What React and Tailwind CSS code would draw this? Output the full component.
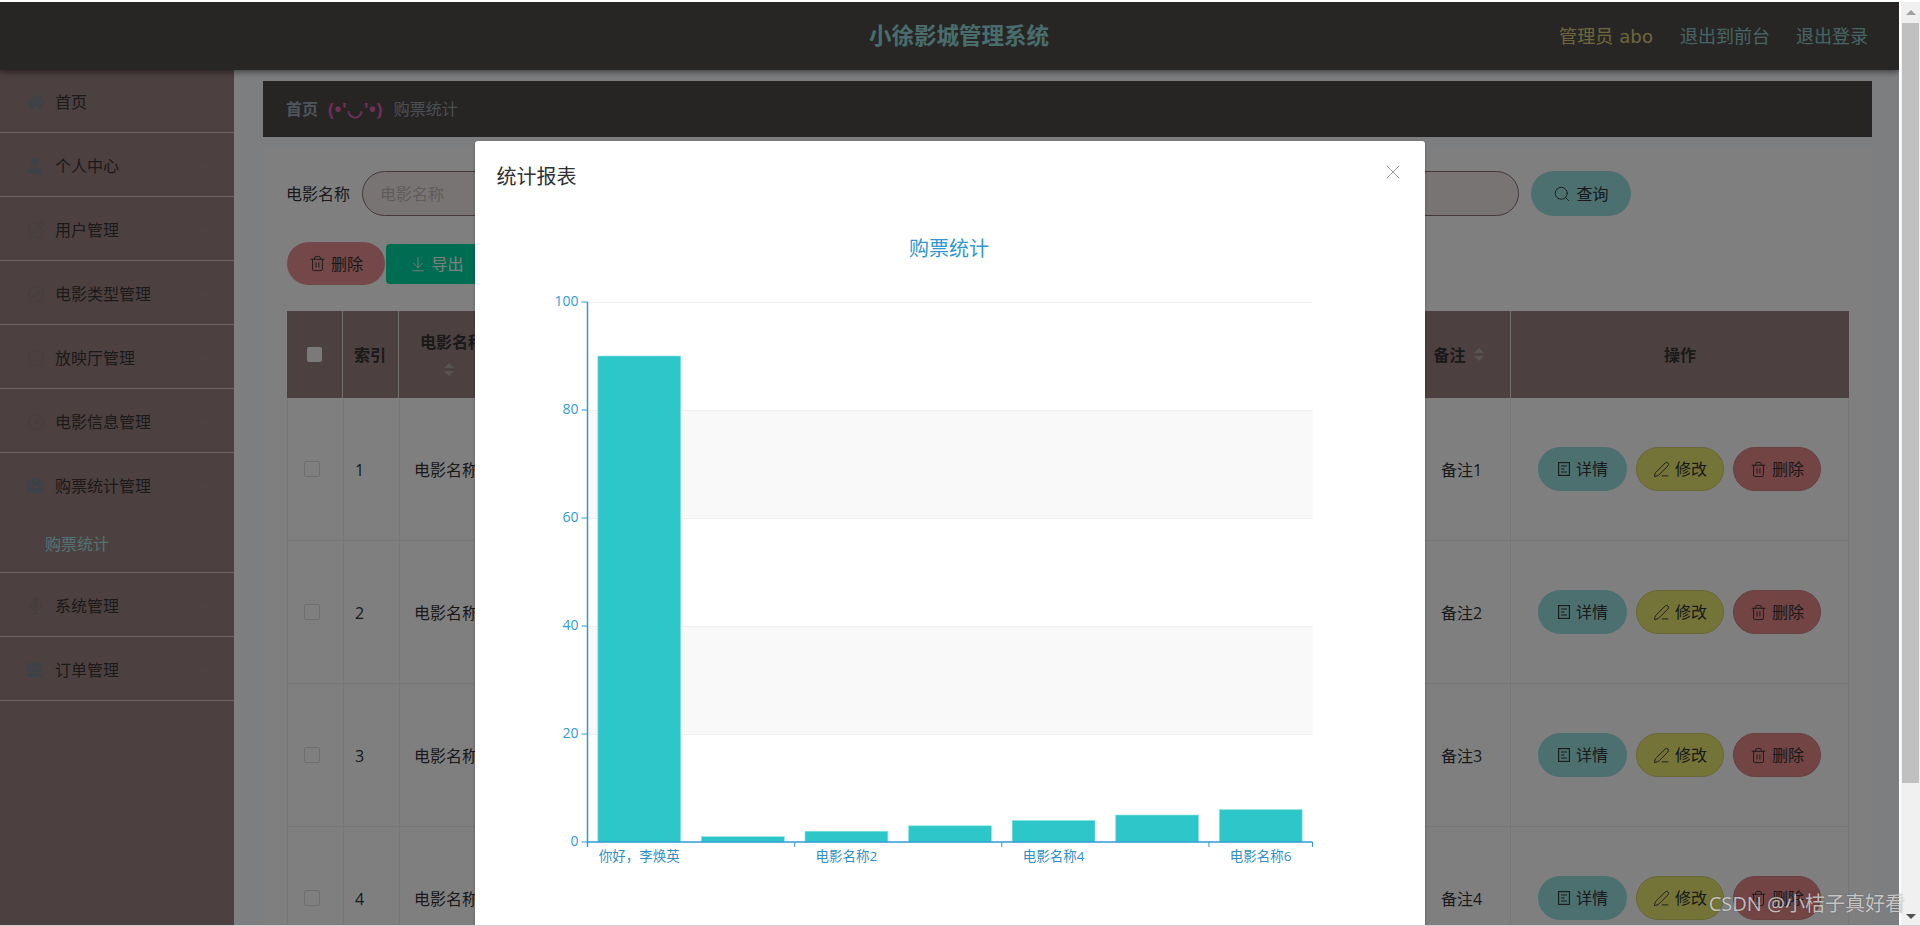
import React from "react";
import { ChevronDown, ChevronUp, Search, ArrowDownToLine, Trash2, PenLine, X, SquarePen, Compass, Square, CircleGauge } from "lucide-react";
import { FaHome, FaUser, FaBriefcase, FaMicrophone, FaServer } from "react-icons/fa";

const DocIcon = () => (
  <svg width="14" height="16" viewBox="0 0 14 16" fill="none" stroke="currentColor" strokeWidth="1.1">
    <rect x="1.6" y="1.6" width="10.8" height="12.8" />
    <path d="M4 5h6M4 8h3.5M4 11h6" />
  </svg>
);

const menu = [
  { label: "首页", icon: <FaHome size={18} />, h: "h-[62px]", noArrow: true },
  { label: "个人中心", icon: <FaUser size={16} /> },
  { label: "用户管理", icon: <SquarePen size={18} strokeWidth={1.4} />, faint: true },
  { label: "电影类型管理", icon: <Compass size={18} strokeWidth={1.4} />, faint: true },
  { label: "放映厅管理", icon: <Square size={18} strokeWidth={1.4} />, faint: true },
  { label: "电影信息管理", icon: <CircleGauge size={18} strokeWidth={1.4} />, faint: true },
  { label: "购票统计管理", icon: <FaBriefcase size={17} />, open: true },
  { label: "系统管理", icon: <FaMicrophone size={17} />, faint: true },
  { label: "订单管理", icon: <FaServer size={16} /> },
];

function MenuItem({ item }) {
  return (
    <div className="border-b border-[#e0d0d0]">
      <div className={`flex items-center pl-[27px] pr-[22px] pt-[2px] text-[16px] text-[#383333] ${item.h || "h-[63px]"}`}>
        <span className={`w-[28px] flex ${item.faint ? "text-[#8c7c7c]" : "text-[#78858f]"}`}>{item.icon}</span>
        <span className="flex-1">{item.label}</span>
        {!item.noArrow &&
          (item.open ? (
            <ChevronUp size={14} className="text-[#a08888]" />
          ) : (
            <ChevronDown size={14} className="text-[#a08888]" />
          ))}
      </div>
      {item.open && (
        <div className="h-[56px] pl-[45px] flex items-center text-[16px] text-[#a4ffff] opacity-80">购票统计</div>
      )}
    </div>
  );
}

function Pill({ className, icon, children }) {
  return (
    <button className={`flex items-center justify-center gap-[5px] rounded-full text-[16px] text-[#333] ${className}`}>
      {icon}
      <span>{children}</span>
    </button>
  );
}

function Sort() {
  return (
    <span className="inline-flex flex-col gap-[3px] items-center align-middle">
      <span className="w-0 h-0 border-x-[5px] border-x-transparent border-b-[5px] border-b-[#b0a8a8]" />
      <span className="w-0 h-0 border-x-[5px] border-x-transparent border-t-[5px] border-t-[#b0a8a8]" />
    </span>
  );
}

const cols = "grid grid-cols-[56px_56px_120px_1fr_98px_338px]";

function Row({ n }) {
  const cell = "border-r border-b border-[#eeeeee] flex items-center text-[16px] text-[#333]";
  return (
    <div className={`${cols} h-[143px] border-l border-[#eeeeee]`}>
      <div className={`${cell} pl-[16px]`}>
        <span className="w-[16px] h-[16px] border border-[#dcdfe6] rounded-[2px]" />
      </div>
      <div className={`${cell} pl-[11px] pt-[1px]`}>{n}</div>
      <div className={`${cell} pl-[14px] pt-[1px]`}>电影名称{n}</div>
      <div className={cell} />
      <div className={`${cell} justify-center pt-[1px]`}>备注{n}</div>
      <div className={`${cell} pl-[27px] gap-[9px]`}>
        <Pill className="w-[89px] h-[44px] bg-[#98e0e0]" icon={<DocIcon />}>详情</Pill>
        <Pill className="w-[88px] h-[44px] bg-[#e8e870] border border-[#d0d068]" icon={<PenLine size={17} strokeWidth={1.3} />}>修改</Pill>
        <Pill className="w-[88px] h-[44px] bg-[#e48888] border border-[#d08080]" icon={<Trash2 size={17} strokeWidth={1.3} />}>删除</Pill>
      </div>
    </div>
  );
}

function Chart() {
  const x0 = 112.5, y0 = 637, unit = 5.4, band = 725 / 7;
  const blue = "#2f9bd6";
  const values = [90, 1, 2, 3, 4, 5, 6];
  const labels = { 0: "你好，李焕英", 2: "电影名称2", 4: "电影名称4", 6: "电影名称6" };
  return (
    <svg width="950" height="721" viewBox="0 0 950 721" className="block">
      <text x="474" y="51" textAnchor="middle" fontSize="20" fill="#3097d1">购票统计</text>
      {[1, 3].map((i) => (
        <rect key={i} x={x0} y={y0 - 540 + i * 108} width="725" height="108" fill="#f9f9f9" />
      ))}
      {[0, 1, 2, 3, 4].map((i) => (
        <line key={i} x1={x0} x2={x0 + 725} y1={y0 - 540 + i * 108 + 0.5} y2={y0 - 540 + i * 108 + 0.5} stroke="#f0f0f0" />
      ))}
      {values.map((v, i) => (
        <rect
          key={i}
          x={x0 + i * band + band * 0.1}
          y={y0 - v * unit}
          width={band * 0.8}
          height={v * unit}
          fill="#2dc7ca"
          stroke="#8fe3e5"
          strokeWidth="0.6"
        />
      ))}
      <line x1={x0} x2={x0} y1={y0 - 540} y2={y0 + 5} stroke={blue} strokeWidth="1.5" />
      <line x1={x0} x2={x0 + 725} y1={y0} y2={y0} stroke={blue} strokeWidth="1.5" />
      {[0, 20, 40, 60, 80, 100].map((v) => (
        <g key={v}>
          <line x1={x0 - 6} x2={x0} y1={y0 - v * unit} y2={y0 - v * unit} stroke={blue} strokeWidth="1" />
          <text x={x0 - 9} y={y0 - v * unit + 4} textAnchor="end" fontSize="14" fill={blue}>{v}</text>
        </g>
      ))}
      {[0, 2, 4, 6, 7].map((i) => (
        <line key={i} x1={x0 + i * band} x2={x0 + i * band} y1={y0} y2={y0 + 5} stroke={blue} strokeWidth="1" />
      ))}
      {Object.keys(labels).map((i) => (
        <text key={i} x={x0 + (Number(i) + 0.5) * band} y={y0 + 19} textAnchor="middle" fontSize="13.5" fill="#2f8fc6">
          {labels[i]}
        </text>
      ))}
    </svg>
  );
}

export default function App() {
  return (
    <div className="relative h-[926px] overflow-hidden flex bg-white border-t-2 border-white border-b border-b-[#cfcfcf] font-['Open_Sans','Noto_Sans_CJK_SC',sans-serif]">
      <div className="relative flex-1 min-w-0 flex flex-col overflow-hidden">
        <header className="h-[68px] shrink-0 bg-[#504c48] shadow-[0_2px_6px_rgba(0,0,0,0.5)] relative z-10 flex items-center justify-end pr-[31px] text-[18px]">
          <div className="absolute inset-x-0 pl-[19px] text-center text-[22.5px] font-bold text-[#a4ffff] opacity-80">小徐影城管理系统</div>
          <span className="text-[#ffee88] opacity-80 relative font-['DejaVu_Sans','Noto_Sans_CJK_SC',sans-serif] tracking-[0.1px]">管理员 abo</span>
          <span className="ml-[27px] text-[#a4ffff] opacity-70 relative">退出到前台</span>
          <span className="ml-[26px] text-[#a4ffff] opacity-70 relative">退出登录</span>
        </header>
        <div className="flex flex-1 min-h-0">
          <aside className="w-[234px] shrink-0 bg-[#9a8080]">
            {menu.map((m) => (
              <MenuItem key={m.label} item={m} />
            ))}
          </aside>
          <main className="flex-1 min-w-0 bg-[#fafcff] pl-[29px] pr-[27px] pt-[11px]">
            <div className="h-[56px] bg-[#4e4a46] flex items-center pl-[23px] text-[16px]">
              <span className="font-bold text-[#a8b4c8] opacity-90">首页</span>
              <span className="ml-[10px] font-bold text-[18px] text-[#ff66cc] opacity-80 tracking-[0.5px]">(•'◡'•)</span>
              <span className="ml-[11px] text-[#a0a8b8] opacity-90">购票统计</span>
            </div>
            <div className="mt-[11px] bg-white h-[900px] pl-[24px] pr-[23px] pt-[23px]">
              <div className="flex items-center h-[45px]">
                <span className="w-[75px] -ml-[1px] mr-[1px] text-[16px] text-[#333]">电影名称</span>
                <div className="w-[1157px] h-[45px] rounded-full border border-[#8a7070] bg-[#f0e8e8] pl-[17px] flex items-center text-[16px] text-[#c0b8b8]">
                  电影名称
                </div>
                <Pill className="ml-[12px] w-[100px] h-[45px] bg-[#98e0e0]" icon={<Search size={18} strokeWidth={1.2} />}>查询</Pill>
              </div>
              <div className="flex items-center h-[43px] mt-[26px]">
                <Pill className="w-[98px] h-[43px] bg-[#e89090]" icon={<Trash2 size={17} strokeWidth={1.3} />}>删除</Pill>
                <button className="ml-[1px] w-[101px] h-[40px] rounded-[4px] bg-[#00d8a4] text-white text-[16px] flex items-center justify-center gap-[4px]">
                  <ArrowDownToLine size={18} strokeWidth={1.2} />
                  导出
                </button>
              </div>
              <div className="mt-[26px]">
                <div className={`${cols} h-[87px] bg-[#9a8080] text-[16px] font-bold text-[#333]`}>
                  <div className="border-r border-[#e8e0e0] flex items-center pl-[20px]">
                    <span className="w-[15px] h-[15px] bg-[#f4f4f4] rounded-[2px]" />
                  </div>
                  <div className="border-r border-[#e8e0e0] flex items-center pl-[11px]">索引</div>
                  <div className="border-r border-[#e8e0e0] flex flex-col items-start justify-center pl-[21px] gap-[2px]">
                    <span>电影名称</span>
                    <span className="ml-[24px]"><Sort /></span>
                  </div>
                  <div />
                  <div className="border-r border-[#e8e0e0] flex items-center justify-center gap-[8px] pr-[6px]">
                    备注 <Sort />
                  </div>
                  <div className="flex items-center justify-center">操作</div>
                </div>
                {[1, 2, 3, 4].map((n) => (
                  <Row key={n} n={n} />
                ))}
              </div>
            </div>
          </main>
        </div>

        <div className="absolute inset-0 z-20 bg-black/50">
          <div className="w-[950px] mx-auto mt-[139px] h-[900px] bg-white rounded-t-[3px] shadow-[0_1px_3px_rgba(0,0,0,0.3)] overflow-hidden">
            <div className="h-[64px] flex items-start justify-between pl-[22px] pr-[20px] pt-[21px]">
              <span className="text-[20px] leading-[30px] text-[#303133]">统计报表</span>
              <X size={24} strokeWidth={0.9} className="text-[#909399] -mt-[2px]" />
            </div>
            <Chart />
          </div>
        </div>
      </div>

      <div className="w-[21px] shrink-0 bg-[#f0f0f0] flex flex-col items-center border-l-2 border-white">
        <div className="h-[21px] flex items-center justify-center">
          <span className="w-0 h-0 border-x-[5px] border-x-transparent border-b-[5px] border-b-[#a0a0a0]" />
        </div>
        <div className="w-[17px] h-[760px] bg-[#c0c0c0]" />
        <div className="flex-1 flex items-end pb-[6px]">
          <span className="w-0 h-0 border-x-[5px] border-x-transparent border-t-[5px] border-t-[#505050]" />
        </div>
      </div>

      <div className="absolute right-[15px] bottom-[8px] z-30 text-[20px] leading-[26px] text-white/70 [text-shadow:0_0_1px_rgba(0,0,0,0.5)]">
        CSDN @小桔子真好看
      </div>
    </div>
  );
}
